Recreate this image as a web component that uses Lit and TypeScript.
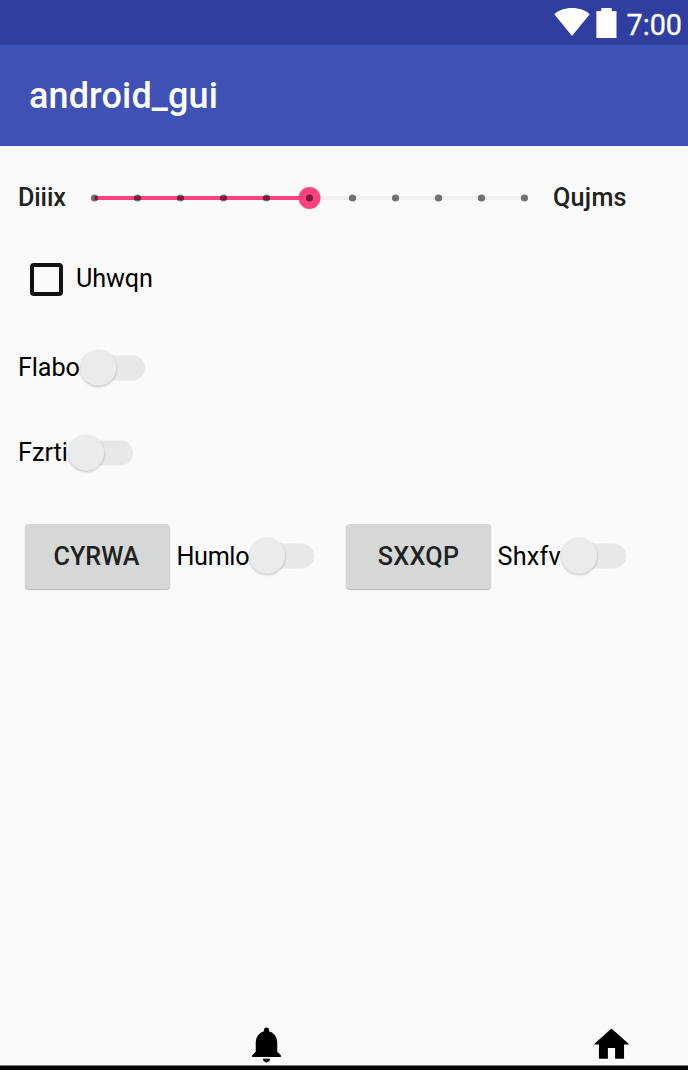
import { LitElement, html, svg, css } from "lit";
import { customElement, property } from "lit/decorators.js";

@customElement("toggle-switch")
class ToggleSwitch extends LitElement {
  static styles = css`
    :host { display: block; flex: none; }
    svg { display: block; overflow: visible; }
    .thumb { filter: drop-shadow(0 1.5px 1px rgba(0, 0, 0, 0.24)); }
  `;
  render() {
    return html`<svg width="66" height="38" viewBox="0 0 66 38">
      <rect x="6" y="6.5" width="59" height="25" rx="12.5" fill="#e8e8e8" />
      <circle class="thumb" cx="18.2" cy="18.8" r="18" fill="#ebebeb" />
    </svg>`;
  }
}

@customElement("discrete-slider")
class DiscreteSlider extends LitElement {
  @property({ type: Number }) value = 5;
  @property({ type: Number }) max = 10;
  static styles = css`
    :host { display: block; flex: none; }
    svg { display: block; }
  `;
  render() {
    const step = 430 / this.max;
    const x = (i: number) => 11.5 + i * step;
    const ticks = Array.from({ length: this.max + 1 }, (_, i) => i);
    return html`<svg width="453" height="24" viewBox="0 0 453 24">
      <rect x="11.5" y="10" width="430" height="4" fill="#f0f0f0" />
      <rect x="11.5" y="10" width=${this.value * step} height="4" fill="#ff4081" />
      <circle cx=${x(this.value)} cy="12" r="11" fill="#ff4081" />
      ${ticks.map((i) => svg`<circle cx=${x(i)} cy="12" r="3.6" fill="#000" fill-opacity="0.54" />`)}
    </svg>`;
  }
}

@customElement("app-root")
class AppRoot extends LitElement {
  static styles = css`
    :host {
      display: flex; flex-direction: column; box-sizing: border-box;
      width: 688px; height: 1070px; overflow: hidden;
      background: #fafafa; color: #000;
      font: 400 25.2px/30px Roboto, sans-serif;
    }
    svg { display: block; flex: none; }
    .status {
      height: 45px; box-sizing: border-box; padding: 0 6px 0 0; background: #303f9f;
      display: flex; justify-content: flex-end; align-items: flex-start; color: #fff;
    }
    .time { font-size: 28.8px; line-height: 34px; padding-top: 8px; margin-left: 9px; -webkit-text-stroke: 0.3px #fff; }
    .battery { margin-left: 6px; }
    .bar {
      height: 101px; box-sizing: border-box; padding: 0 29px; background: #3f51b5; color: #fff;
      display: flex; align-items: center; font-size: 36px; font-weight: 500; letter-spacing: 0.13px;
    }
    .row { display: flex; align-items: center; padding-left: 18px; white-space: nowrap; }
    .slide { height: 104px; }
    .check { height: 58px; padding-left: 30px; }
    .first { height: 120px; }
    .second { height: 50px; }
    .actions { height: 156px; padding-left: 25px; }
    .actions .label { padding-top: 2px; }
    .label { flex: none; }
    .tight { letter-spacing: -0.12px; }
    .tighter { letter-spacing: -0.36px; }
    .loose { letter-spacing: 0.25px; }
    .strong { font-weight: 500; color: #212121; }
    .low { width: 65px; }
    .high { margin-left: 17px; }
    .box {
      width: 33px; height: 33px; box-sizing: border-box; border: 4px solid #111;
      border-radius: 4px; margin-right: 13px;
    }
    .button {
      width: 145px; height: 65px; flex: none; box-sizing: border-box; border: 0; padding: 2px 2px 0 0;
      border-radius: 4px; background: #d6d8d7; color: #212121; font: inherit; font-weight: 500;
      box-shadow: 0 1px 1px rgba(0, 0, 0, 0.24), 0 0 1px rgba(0, 0, 0, 0.12);
    }
    .button.loose { padding-right: 0; }
    .group { display: flex; align-items: center; gap: 6.5px; width: 321px; flex: none; }
    .pair { display: flex; align-items: center; }
    .space { flex: 1; }
    .nav { display: flex; height: 42.5px; padding: 0 55px 0 245px; justify-content: space-between; }
    .edge { height: 4px; background: #000; border-top: 1px solid #7d7d7d; }
  `;
  render() {
    return html`
      <div class="status">
        <svg width="36" height="45" viewBox="0 0 36 45"><path fill="#fff" d="M18 36 .3 14.2C4.6 10.2 10.800 8 18 8s13.400 2.200 17.700 6.200z" /></svg>
        <svg class="battery" width="21" height="45" viewBox="0 0 21 45"><path fill="#fff" d="M5.300 8h10.400v3H20.500v27H.4V11h4.900z" /></svg>
        <span class="time">7:00</span>
      </div>
      <div class="bar">android_gui</div>
      <div class="row slide">
        <span class="label strong low tight">Diiix</span>
        <discrete-slider></discrete-slider>
        <span class="label strong high loose">Qujms</span>
      </div>
      <div class="row check"><span class="box"></span><span class="label tight">Uhwqn</span></div>
      <div class="row first"><span class="label tight">Flabo</span><toggle-switch></toggle-switch></div>
      <div class="row second"><span class="label">Fzrti</span><toggle-switch></toggle-switch></div>
      <div class="row actions">
        <div class="group"><button class="button">CYRWA</button>
          <div class="pair"><span class="label tighter">Humlo</span><toggle-switch></toggle-switch></div></div>
        <div class="group"><button class="button loose">SXXQP</button>
          <div class="pair"><span class="label loose">Shxfv</span><toggle-switch></toggle-switch></div></div>
      </div>
      <div class="space"></div>
      <div class="nav">
        <svg width="43" height="43" viewBox="0 0 24 24"><path d="M12 22c1.1 0 2-.9 2-2h-4c0 1.1.9 2 2 2zm6-6v-5c0-3.070-1.640-5.640-4.500-6.320V4c0-.83-.67-1.500-1.500-1.500s-1.500.67-1.500 1.500v.68C7.630 5.360 6 7.920 6 11v5l-2 2v1h16v-1l-2-2z" /></svg>
        <svg width="43" height="43" viewBox="0 0 24 24"><path d="M10 20v-6h4v6h5v-8h3L12 3 2 12h3v8z" /></svg>
      </div>
      <div class="edge"></div>
    `;
  }
}
